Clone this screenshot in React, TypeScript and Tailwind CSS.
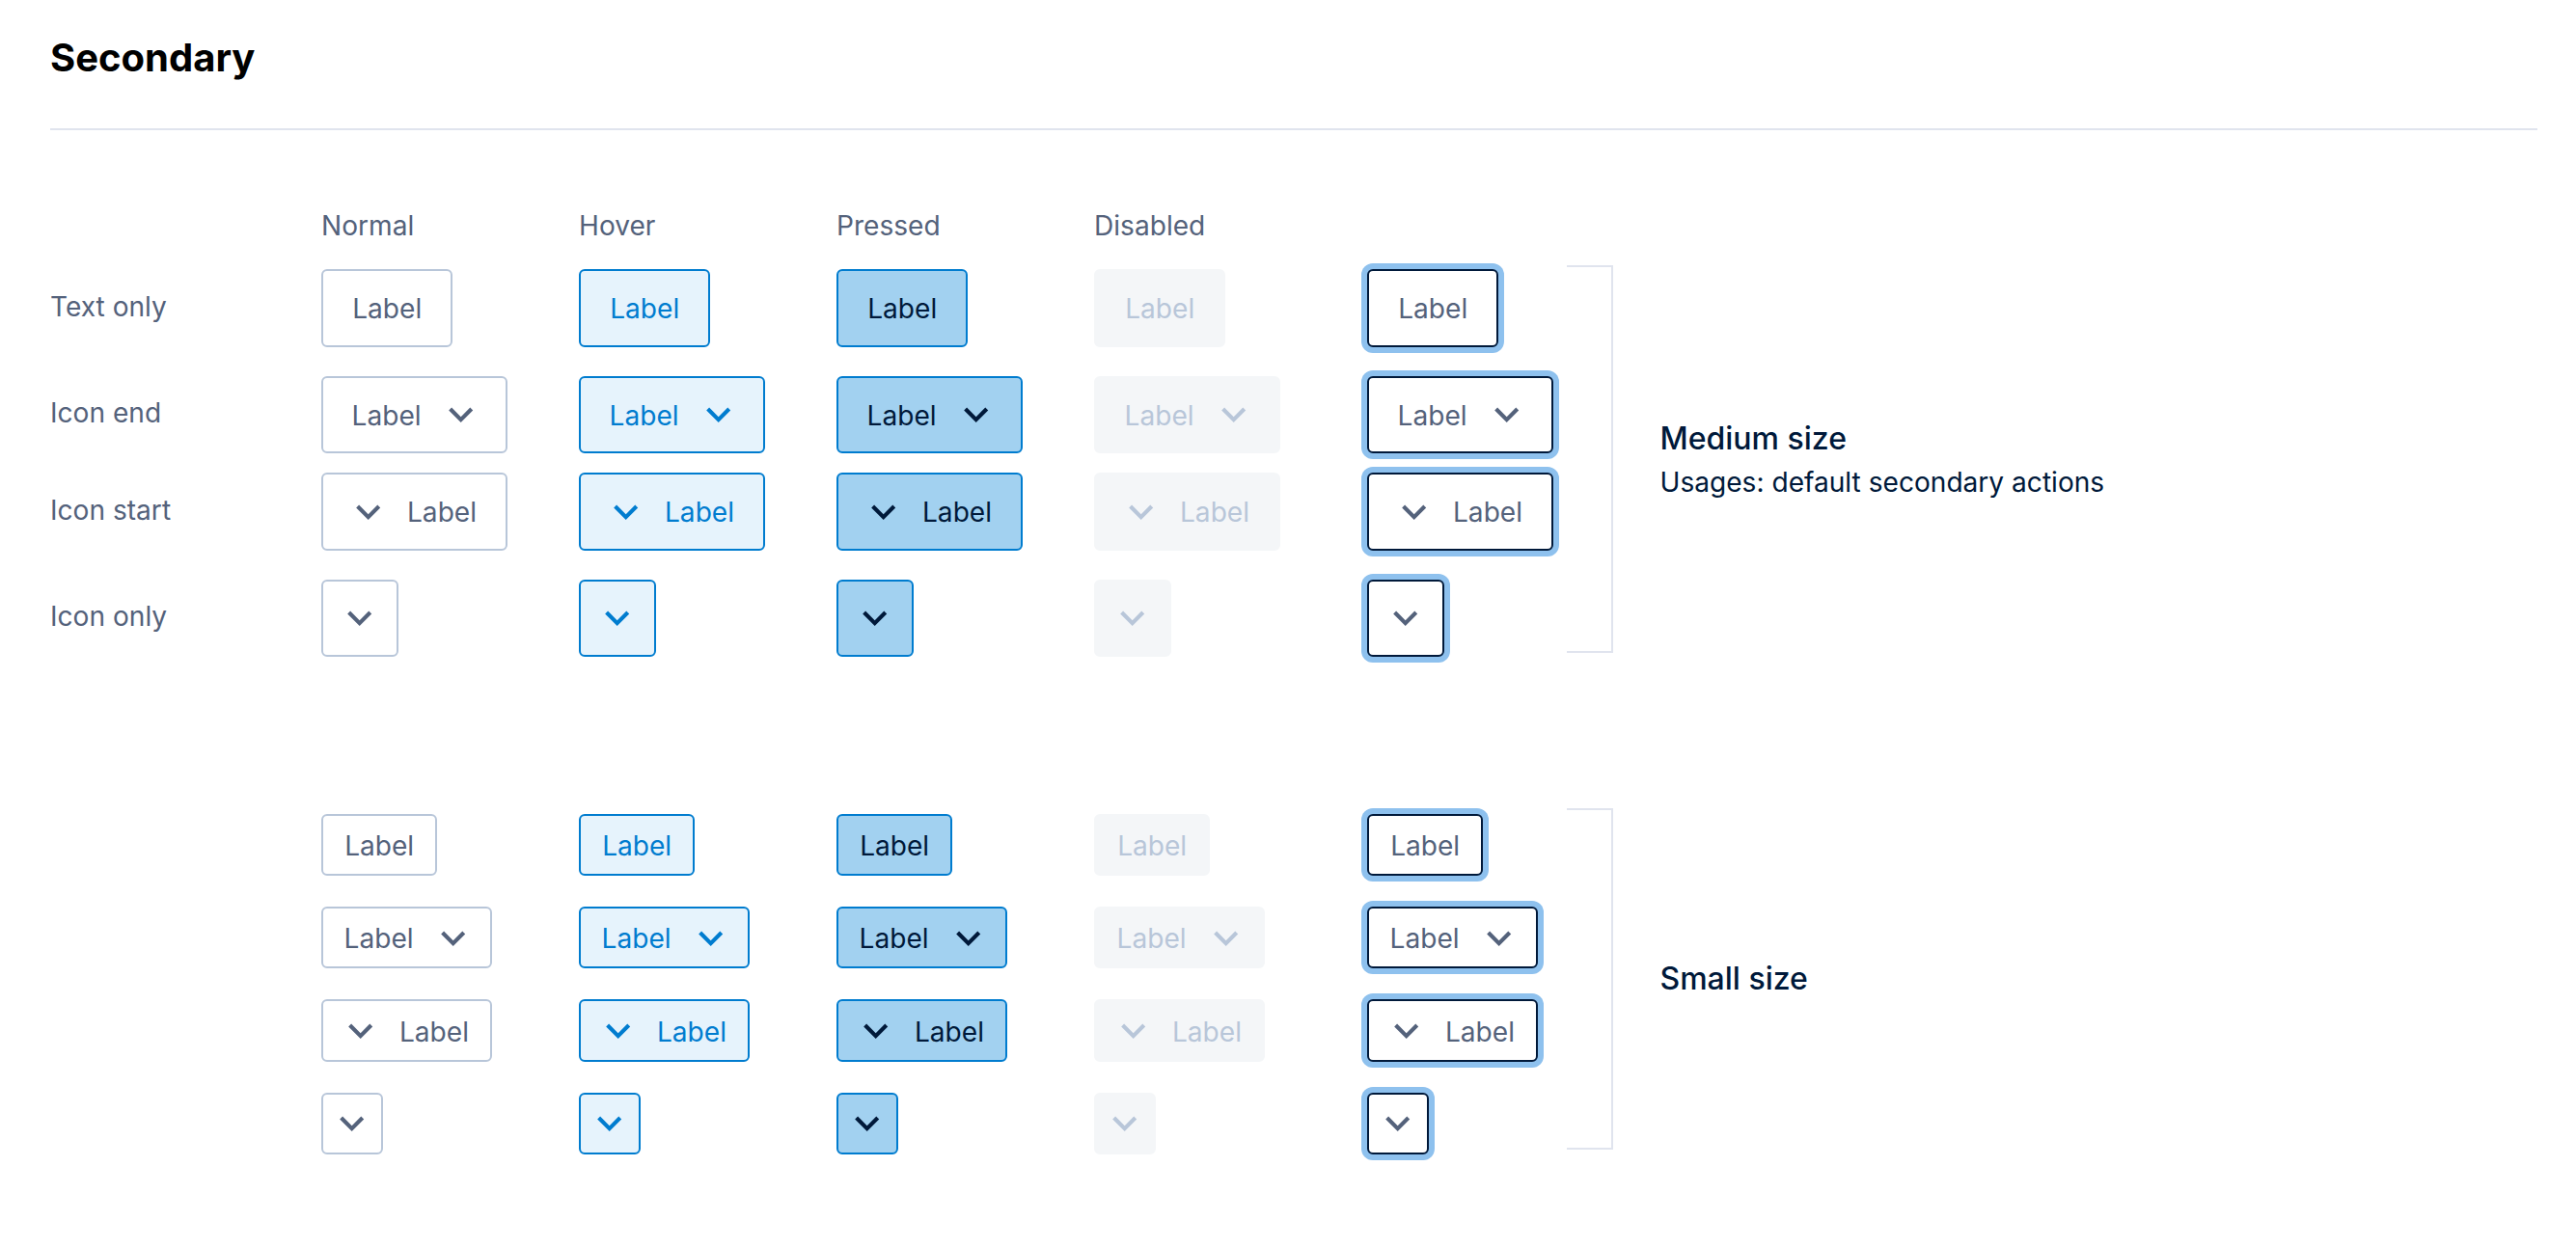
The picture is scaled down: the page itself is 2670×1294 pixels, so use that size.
import clsx from 'clsx';

type Size = 'medium' | 'small';
type Variant = 'text' | 'end' | 'start' | 'icon';

const columns = [
  { name: 'Normal', width: 'w-[267px]', style: 'border-[#b8c6d9] bg-white text-[#54627b]' },
  { name: 'Hover', width: 'w-[267px]', style: 'border-[#007ccf] bg-[#e6f3fc] text-[#007ccf]' },
  { name: 'Pressed', width: 'w-[267px]', style: 'border-[#007ccf] bg-[#a2d1f0] text-[#00193a]' },
  { name: 'Disabled', width: 'w-[283px]', style: 'border-[#f4f6f8] bg-[#f4f6f8] text-[#b8c6d9]' },
  { name: '', width: 'w-[207px]', style: 'border-[#00193a] bg-white text-[#54627b] ring-6 ring-[#8ec1ee]' },
];

const mediumRows: { variant: Variant; title: string; height: string }[] = [
  { variant: 'text', title: 'Text only', height: 'h-[110.6px]' },
  { variant: 'end', title: 'Icon end', height: 'h-[100.4px]' },
  { variant: 'start', title: 'Icon start', height: 'h-[110.4px]' },
  { variant: 'icon', title: 'Icon only', height: 'h-[80.3px]' },
];

const smallRows: Variant[] = ['text', 'end', 'start', 'icon'];

function Chevron() {
  return (
    <svg viewBox="4 4 16 16" className="size-[33.4px] shrink-0" fill="currentColor">
      <path d="M16.59 8.59 12 13.17 7.41 8.59 6 10l6 6 6-6z" />
    </svg>
  );
}

function Button({ size, variant, style }: { size: Size; variant: Variant; style: string }) {
  const medium = size === 'medium';
  return (
    <button
      className={clsx(
        'flex items-center justify-center rounded-[6px] border-2 text-[28.1px] leading-none',
        medium ? 'h-[80.3px]' : 'h-[64.3px]',
        variant === 'text' && (medium ? 'w-[136.4px]' : 'w-[120.3px]'),
        (variant === 'end' || variant === 'start') && (medium ? 'w-[192.6px] gap-6' : 'w-[176.5px] gap-6'),
        variant === 'icon' && (medium ? 'w-[80.3px]' : 'w-[64.3px]'),
        style
      )}
    >
      {variant !== 'text' && variant !== 'end' && <Chevron />}
      {variant !== 'icon' && <span className="pt-0.5">Label</span>}
      {variant === 'end' && <Chevron />}
    </button>
  );
}

function ButtonRow({ size, variant }: { size: Size; variant: Variant }) {
  return (
    <div className="flex">
      {columns.map((col) => (
        <div key={col.name} className={col.width}>
          <Button size={size} variant={variant} style={col.style} />
        </div>
      ))}
    </div>
  );
}

export default function App() {
  return (
    <div
      className="h-[1294px] w-full bg-white pl-[52px] pr-10 text-[28.1px] text-[#54627b]"
      style={{ fontFamily: 'Inter, "Liberation Sans", sans-serif' }}
    >
      <header className="h-[135px] border-b-2 border-[#e0e4ee] pt-9">
        <h1 className="text-[40px] font-bold leading-[48px] text-black">Secondary</h1>
      </header>

      {/* column titles */}
      <div className="flex h-[144.4px] pl-[281px] pt-[82px] leading-[34px]">
        {columns.map((col) => (
          <div key={col.name} className={col.width}>{col.name}</div>
        ))}
      </div>

      {/* medium */}
      <section className="flex">
        <div>
          {mediumRows.map((row) => (
            <div key={row.variant} className={clsx('flex', row.height)}>
              <div className="w-[281px] pt-[21.2px] leading-[34px]">{row.title}</div>
              <ButtonRow size="medium" variant={row.variant} />
            </div>
          ))}
        </div>
        <div className="-mt-1 h-[402px] w-12 border-2 border-l-0 border-[#e0e4ee]" />
        <div className="flex h-[397px] flex-col justify-center pl-[48.5px] text-[#00193a]">
          <h2 className="text-[32px] font-medium leading-10">Medium size</h2>
          <p className="mt-[4.5px] leading-[42px]">Usages: default secondary actions</p>
        </div>
      </section>

      {/* small */}
      <section className="mt-[162.6px] flex pl-[281px]">
        <div className="flex flex-col gap-[32.1px]">
          {smallRows.map((variant) => (
            <ButtonRow key={variant} size="small" variant={variant} />
          ))}
        </div>
        <div className="-mt-1.5 h-[354px] w-12 border-2 border-l-0 border-[#e0e4ee]" />
        <div className="flex h-[342px] flex-col justify-center pl-[48.5px] text-[#00193a]">
          <h2 className="text-[32px] font-medium leading-10">Small size</h2>
        </div>
      </section>
    </div>
  );
}
